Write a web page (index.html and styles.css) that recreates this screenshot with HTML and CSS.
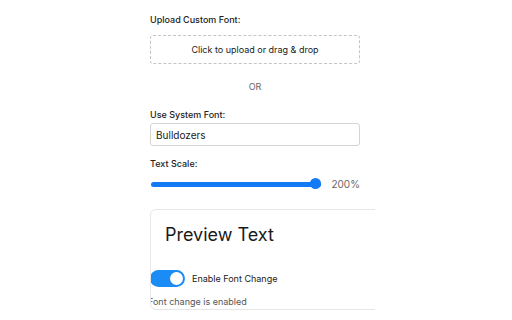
FILE: index.html
```html
<!DOCTYPE html>
<html>
<head>
<meta charset="utf-8">
<link rel="stylesheet" href="styles.css">
</head>
<body>
<div class="panel">
  <div class="field">
    <div class="label">Upload Custom Font:</div>
    <div class="drop">Click to upload or drag &amp; drop</div>
  </div>
  <div class="or">OR</div>
  <div class="field">
    <div class="label">Use System Font:</div>
    <div class="input">Bulldozers</div>
  </div>
  <div class="field scale">
    <div class="label">Text Scale:</div>
    <div class="slider-row">
      <div class="slider"><div class="fill"></div><div class="thumb"></div></div>
      <span class="value">200%</span>
    </div>
  </div>
  <div class="card">
    <div class="preview">Preview Text</div>
    <div class="toggle-row">
      <div class="toggle"><div class="knob"></div></div>
      <span class="toggle-label">Enable Font Change</span>
    </div>
    <div class="status">Font change is enabled</div>
  </div>
</div>
</body>
</html>
```
FILE: styles.css
```css
html, body { margin: 0; padding: 0; background: #fff; }
body { font-family: Inter, "Liberation Sans", sans-serif; color: #1a1a1a; }
.panel { margin-left: 150px; width: 225px; height: 320px; overflow: hidden; padding-top: 14px; box-sizing: border-box; }
.field { width: 210px; }
.label { font-size: 9px; font-weight: 500; line-height: 11px; margin-bottom: 3px; color: #222; }
.drop { margin-top: 10px; height: 29px; border: 1px dashed #c4c4c4; border-radius: 3px; box-sizing: border-box; display: flex; align-items: center; justify-content: center; font-size: 9px; }
.or { width: 210px; text-align: center; font-size: 9px; color: #666; margin-top: 17px; height: 11px; line-height: 11px; margin-bottom: 17px; }
.input { height: 23px; border: 1px solid #d4d4d4; border-radius: 3px; box-sizing: border-box; display: flex; align-items: center; padding-left: 5px; font-size: 10px; }
.field + .field { margin-top: 10px; }
.field.scale { margin-top: 12px; }
.slider-row { display: flex; align-items: center; margin-top: 8px; }
.slider { position: relative; width: 172px; height: 14px; margin-left: 1px; }
.fill { position: absolute; left: 0; right: 0; top: 5px; height: 5px; border-radius: 3px; background: #1479f5; }
.thumb { position: absolute; right: 0; top: 1px; width: 11px; height: 11px; border-radius: 50%; background: #1479f5; }
.value { margin-left: 10px; font-size: 10px; color: #666; }
.card { width: 260px; margin-top: 18px; height: 101px; border: 1px solid #e6e6e6; border-radius: 6px; box-sizing: border-box; overflow: hidden; }
.preview { font-size: 18px; padding: 14px 0 0 14px; line-height: 22px; height: 37px; box-sizing: border-box; }
.toggle-row { display: flex; align-items: center; margin-top: 23px; }
.toggle { width: 35px; height: 17px; border-radius: 9px; background: #1b8cf5; position: relative; margin-left: -1px; flex: none; }
.knob { position: absolute; right: 2px; top: 2px; width: 13px; height: 13px; border-radius: 50%; background: #fff; }
.toggle-label { margin-left: 7px; font-size: 9px; }
.status { font-size: 9px; line-height: 11px; color: #555; margin-top: 9px; margin-left: -3px; }
```
